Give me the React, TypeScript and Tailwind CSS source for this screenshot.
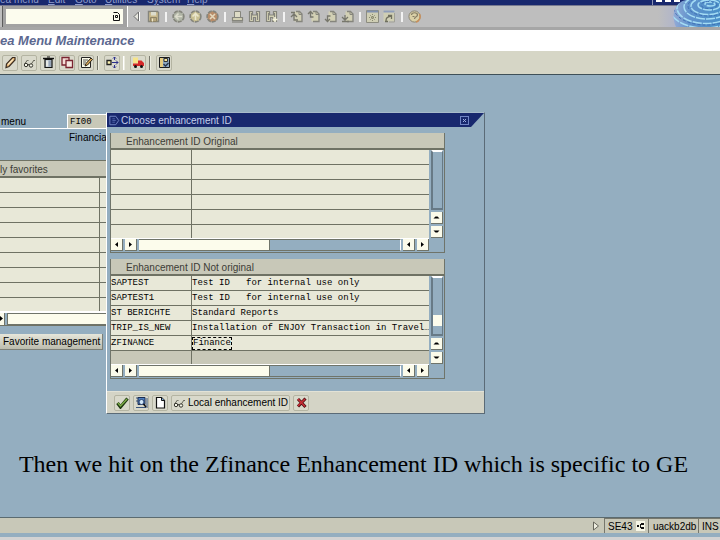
import type { ReactNode } from 'react'

const sans = "font-['Liberation_Sans',sans-serif]"
const mono = "font-['Liberation_Mono',monospace]"

const originalRows = ['', '', '', '', '', '']

const notOriginalRows = [
  { id: 'SAPTEST', text: 'Test ID   for internal use only' },
  { id: 'SAPTEST1', text: 'Test ID   for internal use only' },
  { id: 'ST BERICHTE', text: 'Standard Reports' },
  { id: 'TRIP_IS_NEW', text: 'Installation of ENJOY Transaction in Travel', more: true },
  { id: 'ZFINANCE', text: 'Finance', focused: true },
]

function Icon({ children, className = 'size-[13px]' }: { children: ReactNode; className?: string }) {
  return (
    <svg viewBox="0 0 13 13" className={`shrink-0 ${className}`} fill="none" aria-hidden="true">
      {children}
    </svg>
  )
}

/* ---- standard toolbar icons ---- */

const grey = '#85857c'
const cream = '#d2d0b4'

function RoundIcon({ fill, children }: { fill: string; children: ReactNode }) {
  return (
    <Icon>
      <circle cx="6.5" cy="6.5" r="5.4" fill={fill} stroke={grey} strokeWidth="1.6" strokeDasharray="4 1" />
      {children}
    </Icon>
  )
}

function PageIcon({ d }: { d: string }) {
  return (
    <Icon>
      <path d="M4.500 1.500h5l2 2v8h-7z" fill={cream} />
      <path d="M6 1.500h3.500l2.500 2.500v7.500h-6" stroke={grey} strokeWidth="1.300" />
      <path d="M9 2v2.500h3" stroke={grey} />
      <path d={d} stroke="#77776c" strokeWidth="1.300" />
    </Icon>
  )
}

function Binoculars({ next = false }: { next?: boolean }) {
  return (
    <Icon>
      <path
        d="M1.500 1.500h3v3.500h4v-3.500h3v10h-4v-4h-2v4h-4z"
        fill={cream}
        stroke={grey}
        strokeWidth="1.200"
      />
      <path d="M3.500 3v7M9.500 3v7" stroke={grey} />
      {next && <path d="M7.500 9.500h5M10 7v5" stroke="#f4f2dc" strokeWidth="1.600" />}
    </Icon>
  )
}

const standardGroups: { label: string; icon: ReactNode }[][] = [
  [
    {
      label: 'Close command field',
      icon: (
        <Icon>
          <path d="M8.500 2v9L4 6.500z" fill="#e6e6de" stroke="#6f6f6f" />
          <path d="M9.500 2v9" stroke="#fff" />
        </Icon>
      ),
    },
    {
      label: 'Save',
      icon: (
        <Icon>
          <path d="M1.500 1.500h9l1 1v9h-10z" fill="#c9b98c" stroke={grey} strokeWidth="1.400" />
          <path d="M4 2h5v3.500H4z" fill="#dcdccc" />
          <path d="M3.500 7.500h6v4h-6z" fill="#b5a67e" stroke="#8f8466" />
          <path d="M5.500 8.500v3" stroke="#eee8cc" />
        </Icon>
      ),
    },
  ],
  [
    {
      label: 'Back',
      icon: (
        <RoundIcon fill="#b0b5a6">
          <path d="M6.500 3.500l-3 3 3 3M4 6.500h6" stroke="#dcdccc" strokeWidth="1.600" />
        </RoundIcon>
      ),
    },
    {
      label: 'Exit',
      icon: (
        <RoundIcon fill="#c8bf92">
          <path d="M3.500 6.500l3-3 3 3M6.500 4v6" stroke="#eae6cc" strokeWidth="1.600" />
        </RoundIcon>
      ),
    },
    {
      label: 'Cancel',
      icon: (
        <RoundIcon fill="#b88c68">
          <path d="M4 4l5 5M9 4l-5 5" stroke="#e4d8bc" strokeWidth="1.600" />
        </RoundIcon>
      ),
    },
  ],
  [
    {
      label: 'Print',
      icon: (
        <Icon>
          <path d="M3.500 1.500h6v6h-6z" fill="#dedcc6" stroke={grey} />
          <path d="M1.500 7.500h10v3h-10z" fill={cream} stroke={grey} strokeWidth="1.200" />
          <path d="M1 12h11" stroke="#77776c" />
        </Icon>
      ),
    },
    { label: 'Find', icon: <Binoculars /> },
    { label: 'Find next', icon: <Binoculars next /> },
  ],
  [
    { label: 'First page', icon: <PageIcon d="M1 2.500h4M1 7l3-3 3 3M4 5v5h4" /> },
    { label: 'Previous page', icon: <PageIcon d="M1 4l2.500-2.500L6 4M3.500 2v5h3" /> },
    { label: 'Next page', icon: <PageIcon d="M1 9l2.500 2.500L6 9M3.500 11V6h3" /> },
    { label: 'Last page', icon: <PageIcon d="M1 7l3 3 3-3M1 11.500h7M4 9V5" /> },
  ],
  [
    {
      label: 'New session',
      icon: (
        <Icon>
          <path d="M.5.5h12v12H.5z" fill="#cfceb4" stroke="#8c8c80" />
          <path d="M1 1.500h11" stroke="#7f8fae" strokeWidth="2" />
          <path d="M6.500 4v7M3 7.500h7M4 5l5 5M9 5l-5 5" stroke="#8a8a70" strokeDasharray="1 1" />
        </Icon>
      ),
    },
    {
      label: 'Create shortcut',
      icon: (
        <Icon>
          <path d="M.5.5h11v11H.5z" fill="#cfceb4" />
          <path d="M.5 1.500h11" stroke="#8f9dba" strokeWidth="2" />
          <path d="M11.500 3v9H6" stroke="#a0a096" />
          <path d="M3 11c0-3 1-4 5-5M5 5.500h3.500v3.500M2 11.500h3" stroke="#6f6f5e" strokeWidth="1.300" />
        </Icon>
      ),
    },
  ],
  [
    {
      label: 'Help',
      icon: (
        <Icon>
          <circle cx="6.500" cy="6.500" r="5.600" fill="#d9d0a6" stroke="#8a8676" />
          <path d="M8 12a5.600 5.600 0 0 0 3.500-8" stroke="#c98f5a" strokeWidth="1.500" />
          <path d="M3.500 5c0-3 6-3 6 0 0 2-3 1.500-3 4M4.500 6.500h2" stroke="#857d64" strokeWidth="1.200" />
        </Icon>
      ),
    },
  ],
]

/* ---- application toolbar icons ---- */

function Glasses() {
  return (
    <Icon>
      <path d="M1.500 8l3-4 1 1M8 8.500l3-4.500 1 1" stroke="#66665a" />
      <circle cx="3" cy="9" r="1.700" stroke="#33332c" fill="#f6f6e8" />
      <circle cx="8" cy="9.500" r="1.700" stroke="#33332c" fill="#f6f6e8" />
      <path d="M4.700 8.500l2 .5" stroke="#33332c" />
    </Icon>
  )
}

const appGroups: { label: string; icon: ReactNode }[][] = [
  [
    {
      label: 'Change',
      icon: (
        <Icon>
          <path d="M2 11.500l.5-3.500L8.500 1.500h2.500v2.500L5 10.500z" fill="#e8b878" stroke="#3a2c20" strokeWidth="1.200" />
          <path d="M4 8.500l5-5" stroke="#fbe8c0" strokeWidth="1.200" />
        </Icon>
      ),
    },
    { label: 'Display', icon: <Glasses /> },
    {
      label: 'Delete',
      icon: (
        <Icon>
          <path d="M1 2.500h11" stroke="#111" strokeWidth="1.400" />
          <path d="M5 1h3" stroke="#111" />
          <path d="M3 3.500h7v8H3z" fill="#b4c0cc" stroke="#111" strokeWidth="1.200" />
          <path d="M5 4.500v6" stroke="#f2f2ea" strokeWidth="1.600" />
          <path d="M8 4.500v6" stroke="#7c8ba4" />
        </Icon>
      ),
    },
    {
      label: 'Copy',
      icon: (
        <Icon>
          <path d="M1 1.500h7v7.500H1z" fill="#f4dcd6" stroke="#7a2430" strokeWidth="1.300" />
          <path d="M5 4.500h6.500v7H5z" fill="#f6e9e2" stroke="#7a2430" strokeWidth="1.300" />
        </Icon>
      ),
    },
    {
      label: 'Edit text',
      icon: (
        <Icon>
          <path d="M1.500 1.500h9v10h-9z" fill="#fafae8" stroke="#222" />
          <path d="M3 4h5M3 6h3M3 8h2" stroke="#555" />
          <path d="M5 10l1-2.500L11 2l1.500 1.500L7.500 9z" fill="#dcaa58" stroke="#2c2416" />
        </Icon>
      ),
    },
  ],
  [
    {
      label: 'Move',
      icon: (
        <Icon>
          <path d="M1 4.500h4v4H1z" fill="#fbf2b0" stroke="#222" strokeWidth="1.300" />
          <path
            d="M6 6.500h6M10 4.500l2 2-2 2M8.500 1v3M7 2.500L8.500 1 10 2.500M8.500 9v3M7 10.500L8.500 12l1.500-1.500"
            stroke="#2b2f8c"
          />
        </Icon>
      ),
    },
  ],
  [
    {
      label: 'Transport',
      icon: (
        <Icon>
          <path d="M1 1.500h5v6H1z" fill="#f6e48a" />
          <path d="M6 4.500h3.500l2.500 2.500v3H1V7.500h5z" fill="#d52a2a" />
          <circle cx="3.500" cy="10.500" r="1.500" fill="#111" />
          <circle cx="9.500" cy="10.500" r="1.500" fill="#111" />
        </Icon>
      ),
    },
  ],
  [
    {
      label: 'Where used',
      icon: (
        <Icon>
          <path d="M1.500 1.500h10v10h-10z" fill="#8fa8c0" stroke="#1c1c1c" />
          <path d="M2 2h3v9H2z" fill="#e6cc80" />
          <path d="M6 2.500h3.500v3H6z" fill="#f7e7a0" stroke="#333" />
          <path d="M5.500 8l2 2 3-3" stroke="#26344c" strokeWidth="1.300" />
        </Icon>
      ),
    },
  ],
]

function Fingerprint() {
  return (
    <svg viewBox="0 0 62 27" className="absolute top-0 right-0 h-[27px] w-[62px]" aria-hidden="true">
      <defs>
        <linearGradient id="haze" x1="0" x2="1">
          <stop offset="0" stopColor="#bebebe" />
          <stop offset="1" stopColor="#a9b0d0" />
        </linearGradient>
        <linearGradient id="skin" x1="0" x2="1">
          <stop offset="0" stopColor="#9fb0d8" />
          <stop offset=".4" stopColor="#5f92cc" />
          <stop offset="1" stopColor="#4a90c8" />
        </linearGradient>
        <clipPath id="thumb">
          <path d="M62 0H28c-5 1-8 4-9 6-5 6-4 14-1 21h44z" />
        </clipPath>
      </defs>
      <path d="M0 6h26v21H0z" fill="url(#haze)" />
      <g clipPath="url(#thumb)">
        <path d="M12 0h50v27H12z" fill="url(#skin)" />
        <g fill="none" stroke="#a4dcf4" strokeWidth="1.500" strokeDasharray="9 1">
          <ellipse cx="52" cy="4" rx="5" ry="2" />
          <ellipse cx="51" cy="5" rx="11" ry="5" />
          <ellipse cx="50" cy="6" rx="17" ry="8.500" />
          <ellipse cx="49" cy="7" rx="23" ry="12" />
          <ellipse cx="48" cy="8" rx="29" ry="15.500" />
          <ellipse cx="47" cy="9" rx="35" ry="19" />
        </g>
        <g fill="none" stroke="#3f70b4" strokeDasharray="3 2">
          <ellipse cx="51" cy="5" rx="8" ry="3.500" />
          <ellipse cx="50" cy="6" rx="20" ry="10" />
          <ellipse cx="48" cy="8" rx="32" ry="17" />
        </g>
      </g>
    </svg>
  )
}

/* ---- scrollbars ---- */

const arrows = {
  left: 'M7 3v5L4 5.500z',
  right: 'M4 3v5l3-2.500z',
  up: 'M2.500 6.500h6l-2-2h-2z',
  down: 'M2.500 4.500h6l-2 2h-2z',
}

function ScrollButton({ dir }: { dir: keyof typeof arrows }) {
  return (
    <button
      type="button"
      aria-label={`Scroll ${dir}`}
      className="flex size-3 shrink-0 items-center justify-center border-r border-b border-[#6f746a] bg-[#fbfbea]"
    >
      <svg viewBox="0 0 11 11" className="size-[11px]" aria-hidden="true">
        <path d={arrows[dir]} fill="#000" />
      </svg>
    </button>
  )
}

function HScroll() {
  return (
    <div className="flex h-[14px] gap-[2px] border-t border-white pb-px">
      <ScrollButton dir="left" />
      <ScrollButton dir="right" />
      <div className="flex-1 border-y border-r border-[#6f746a] border-r-white">
        <div className="h-full w-1/2 border-r border-[#6f746a] bg-[#fcfcec]" />
      </div>
      <ScrollButton dir="left" />
      <ScrollButton dir="right" />
    </div>
  )
}

function VScroll({ thumb = false }: { thumb?: boolean }) {
  return (
    <div className="flex w-[15px] flex-col items-center gap-[2px] pb-[14px]">
      <div className="relative w-3 flex-1 border-2 border-r border-[#677a86] border-t-white">
        {thumb && <div className="absolute inset-x-0 bottom-2 h-[11px] bg-[#fcfcec]" />}
      </div>
      <ScrollButton dir="up" />
      <ScrollButton dir="down" />
    </div>
  )
}

function Grid({ title, thumb, children }: { title: string; thumb?: boolean; children: ReactNode }) {
  return (
    <section className="border-r border-b border-l border-[#6f746a]">
      <h2 className="h-[17px] border-b-2 border-[#6f7264] bg-[#c8c8b8] pl-[15px] text-[10px] leading-[17px] text-[#3c3c36]">
        {title}
      </h2>
      <div className="flex">
        <div className="min-w-0 flex-1">
          <table aria-label={title} className="w-full table-fixed border-separate border-spacing-0">
            <colgroup>
              <col className="w-[81px]" />
              <col />
            </colgroup>
            <tbody>{children}</tbody>
          </table>
          <HScroll />
        </div>
        <VScroll thumb={thumb} />
      </div>
    </section>
  )
}

const cell = 'overflow-hidden border-[#6f7264] p-0 whitespace-pre'

function OriginalTable() {
  return (
    <Grid title="Enhancement ID Original">
      {originalRows.map((_, i) => {
        const last = i === originalRows.length - 1
        const height = last ? 'h-[13px]' : 'h-[15px] border-b'
        return (
          <tr key={i} className="bg-[#e8e8d8]">
            <td className={`${cell} ${height} border-r`} />
            <td className={`${cell} ${height}`} />
          </tr>
        )
      })}
    </Grid>
  )
}

function NotOriginalTable() {
  return (
    <Grid title="Enhancement ID Not original" thumb>
      {notOriginalRows.map((row) => (
        <tr key={row.id} className={`bg-[#e8e8d8] text-[9px] leading-[14px] text-black ${mono}`}>
          <td className={`${cell} h-[15px] border-r border-b`}>{row.id}</td>
          <td className={`${cell} h-[15px] border-b`}>
            <div className="flex h-[14px] items-center justify-between">
              <span className={row.focused ? 'border border-dashed border-black leading-[11px]' : ''}>
                {row.text}
              </span>
              {row.more && <span className="text-[8px]">…</span>}
            </div>
          </td>
        </tr>
      ))}
      <tr className="bg-[#c8c8b8]">
        <td className={`${cell} h-[13px] border-r`} />
        <td className={`${cell} h-[13px]`} />
      </tr>
    </Grid>
  )
}

const toolButton =
  'flex h-4 min-w-4 items-center justify-center rounded-[2px] border border-[#b4b4a2] bg-[#d9d9cb]'

function EnhancementDialog() {
  return (
    <div
      role="dialog"
      aria-labelledby="dialog-title"
      className="absolute top-[37px] left-[106px] w-[379px] border-t border-r border-b border-l border-t-[#a9bccb] border-r-[#5b6b77] border-b-[#5b6b77] border-l-white bg-[#94aec0]"
    >
      <div className="flex h-[14px] items-center bg-[#18286e] pr-[15px] pl-[2px] [clip-path:polygon(0_0,100%_0,calc(100%-13px)_100%,0_100%)]">
        <Icon className="size-[11px]">
          <path d="M1 1.500h7l3.500 5-3.500 5H1z" stroke="#7f92d0" />
          <path d="M4 4.500h3M4 6.500h4M4 8.500h3" stroke="#5468b0" />
        </Icon>
        <h1 id="dialog-title" className="ml-px flex-1 text-[10px] leading-[15px] text-[#c3cdea]">
          Choose enhancement ID
        </h1>
        <button type="button" aria-label="Close" className="flex size-[9px] items-center justify-center border border-[#6f83c4]">
          <svg viewBox="0 0 7 7" className="size-[7px]" aria-hidden="true">
            <path d="M2 2l3 3M5 2L2 5" stroke="#9fb0e2" />
          </svg>
        </button>
      </div>

      <div className="flex flex-col gap-[6px] pt-[6px] pr-[39px] pb-3 pl-[3px]">
        <OriginalTable />
        <NotOriginalTable />
      </div>

      <div className="flex h-[22px] items-center gap-[3px] border-t border-[#e2e2d6] bg-[#d4d4c6] pl-[7px]">
        <button type="button" aria-label="Continue" className={toolButton}>
          <Icon>
            <path d="M1.500 7l3 4L11.500 2.500" stroke="#1f3a12" strokeWidth="3.200" />
            <path d="M2 7l2.500 3L11 3" stroke="#7fae48" strokeWidth="1.400" />
          </Icon>
        </button>
        <button type="button" aria-label="Find" className={toolButton}>
          <Icon>
            <path d="M1 2h3M1 5h2M1 11.500h10M12 2v10" stroke="#39557c" />
            <path d="M3 1.500h7v7H3z" fill="#4c7fc0" stroke="#1c2c50" />
            <circle cx="6.500" cy="6" r="2.500" fill="#cfe6f8" stroke="#2a4470" />
            <path d="M8.500 8l2.500 3" stroke="#111" strokeWidth="1.500" />
          </Icon>
        </button>
        <button type="button" aria-label="Create" className={toolButton}>
          <Icon>
            <path d="M2.500 1.500h5l3 3v7.500h-8z" fill="#fff" stroke="#111" strokeWidth="1.200" />
            <path d="M7.500 1.500v3h3" fill="#7fb0e0" stroke="#111" />
          </Icon>
        </button>
        <button type="button" className={`${toolButton} gap-[2px] px-px text-[10px] text-black`}>
          <Glasses />
          Local enhancement ID
        </button>
        <button type="button" aria-label="Cancel" className={toolButton}>
          <Icon>
            <path d="M3 3l7.500 8M10.500 2.500L3 10.500" stroke="#4c0c10" strokeWidth="3" />
            <path d="M3 3l7 7.500M10 3L3 10" stroke="#c83038" strokeWidth="1.600" />
          </Icon>
        </button>
      </div>
    </div>
  )
}

function FavoritesPanel() {
  return (
    <div className="w-[120px] pt-[39px]">
      <div className="flex">
        <label
          htmlFor="menu"
          className="flex h-[15px] w-[67px] items-center border-b border-white pl-px text-[10px] text-black"
        >
          menu
        </label>
        <input
          id="menu"
          defaultValue="FI00"
          className={`h-[15px] min-w-0 flex-1 border border-r-0 border-white bg-[#c8c8b8] pl-[2px] text-[9px] text-black ${mono}`}
        />
      </div>
      <p className="pt-[2px] pl-[69px] text-[10px] leading-[14px] text-black">Financia</p>

      <section className="mt-[15px] border-t border-[#6f7264]">
        <h2 className="h-[17px] border-b-2 border-[#6f7264] bg-[#c8c8b8] text-[10px] leading-[17px] text-[#3c3c36]">
          ly favorites
        </h2>
        <table aria-label="My favorites" className="w-full table-fixed border-separate border-spacing-0">
          <colgroup>
            <col className="w-[100px]" />
            <col />
          </colgroup>
          <tbody>
            {Array.from({ length: 9 }, (_, i) => {
              const height = i === 8 ? 'h-[13px]' : 'h-[15px] border-b'
              return (
                <tr key={i} className="bg-[#e8e8d8]">
                  <td className={`${cell} ${height} border-r`} />
                  <td className={`${cell} ${height}`} />
                </tr>
              )
            })}
          </tbody>
        </table>
        <div className="flex h-[15px] gap-[2px] border-t-2 border-b border-white border-b-[#6f7264]">
          <div className="flex w-[5px] justify-end border-r border-[#6f746a] bg-[#fbfbea]">
            <svg viewBox="0 0 4 11" className="h-[11px] w-1" aria-hidden="true">
              <path d="M0 3v5l3-2.500z" fill="#000" />
            </svg>
          </div>
          <div className="flex-1 border border-[#6f746a] bg-[#fcfcec]" />
        </div>
      </section>

      <button
        type="button"
        className="mt-2 block h-4 w-[103px] border-r border-b border-[#7d8078] bg-linear-to-b from-[#e6e6da] to-[#bcbcae] pl-[3px] text-left text-[10px] leading-[15px] whitespace-nowrap text-black"
      >
        Favorite management
      </button>
    </div>
  )
}

export default function App() {
  return (
    <div className={`flex min-h-screen flex-col overflow-hidden bg-[#94aec0] ${sans}`}>
      <header className="relative">
        <div className="flex h-[6px] items-end overflow-hidden border-b border-[#777a90] bg-[#18286e]">
          <nav className="flex text-[10px] leading-[10px] whitespace-nowrap text-[#8f9ccc]">
            <a href="#menu" className="w-12">ea menu</a>
            <a href="#edit" className="w-[27px]"><u>E</u>dit</a>
            <a href="#goto" className="w-[30px]"><u>G</u>oto</a>
            <a href="#utilities" className="w-[42px]"><u>U</u>tilities</a>
            <a href="#system" className="w-10">S<u>y</u>stem</a>
            <a href="#help"><u>H</u>elp</a>
          </nav>
          <div className="mr-10 ml-auto flex h-[5px] w-7 gap-[3px] border-l border-[#8c93b4] pl-[3px]">
            <span className="h-[2px] w-[6px] bg-white" />
            <span className="h-[2px] w-[6px] bg-white" />
            <span className="h-[2px] w-[6px] bg-white" />
          </div>
        </div>

        <div className="flex h-6 items-stretch border-b-3 border-[#a6a6a6] bg-[#bebebe]">
          <div className="flex w-[128px] shrink-0 items-center border-r border-white bg-[#a2a2a2] pr-1">
            <div className="mr-[3px] w-[3px] self-stretch border-r border-[#5c5c5c] bg-[#bebebe]" />
            <div className="flex h-[15px] min-w-0 flex-1 items-center bg-[#fcfcee] pr-[2px]">
              <input aria-label="Command" className="h-full min-w-0 flex-1 bg-transparent px-1 text-[10px]" />
              <svg viewBox="0 0 9 9" className="size-[9px] shrink-0" fill="none" aria-hidden="true">
                <path d="M1.500 3v5.500h6V2.500L5.500.5h-4" stroke="#111" />
                <path d="M3.500 3.500h2v2h-2z" stroke="#111" />
              </svg>
            </div>
          </div>
          {standardGroups.map((group, i) => (
            <div key={i} className="flex items-center">
              {i > 0 && <span className="mx-[3px] h-[10px] w-[2px] bg-[#f2f2f2]" />}
              {group.map((item) => (
                <button key={item.label} type="button" aria-label={item.label} className="flex w-[17px] justify-center">
                  {item.icon}
                </button>
              ))}
            </div>
          ))}
        </div>
        <Fingerprint />
      </header>

      <div className="h-[21px] bg-white text-[13px] leading-[21px] font-bold text-[#5c6890] italic">
        ea Menu Maintenance
      </div>

      <div className="flex h-6 items-center gap-[3px] border-b border-[#3f5058] bg-[#d6d6c6] pl-[2px]">
        {appGroups.map((group, i) => (
          <div key={i} className="flex items-center gap-[3px]">
            {i > 0 && (
              <span className="flex h-[14px] w-1">
                <span className={`w-px ${i === 2 ? 'bg-white' : 'bg-[#77776c]'}`} />
                <span className="w-px bg-[#ecece0]" />
              </span>
            )}
            {group.map((item) => (
              <button key={item.label} type="button" aria-label={item.label} className={toolButton}>
                {item.icon}
              </button>
            ))}
          </div>
        ))}
      </div>

      <main className="relative flex-1">
        <FavoritesPanel />
        <EnhancementDialog />
        <p className="mt-[100px] pr-[13px] text-center font-['Liberation_Serif',serif] text-[24px] leading-[28px] text-black">
          Then we hit on the Zfinance Enhancement ID which is specific to GE
        </p>
      </main>

      <footer className="border-b-3 border-[#d2d2d2]">
        <div className="mb-1 flex h-4 items-stretch justify-end border-t border-[#5b6b70] bg-[#c8c8b8] text-[10px] leading-[15px] text-black">
          <svg viewBox="0 0 8 10" className="mr-1 h-[10px] w-2 self-center" aria-hidden="true">
            <path d="M1.500 1v8l5-4z" fill="#f0f0e2" stroke="#66665c" />
          </svg>
          <div className="flex w-11 items-center justify-between border-t border-l border-[#77776c] pr-[3px] pl-[3px]">
            SE43
            <svg viewBox="0 0 9 10" className="h-[10px] w-[9px] shrink-0" fill="none" aria-hidden="true">
              <path d="M0 0h9v10H0z" fill="#f6f6e6" />
              <path d="M1 4h2v2H1zM5 2h3v2H5zM5 6h3v2H5z" fill="#111" />
              <path d="M4.500 3v4" stroke="#111" />
            </svg>
          </div>
          <div className="w-[50px] border-t border-l border-[#77776c] pl-1">uackb2db</div>
          <div className="w-[22px] border-t border-l border-[#77776c] pl-[3px]">INS</div>
        </div>
      </footer>
    </div>
  )
}
